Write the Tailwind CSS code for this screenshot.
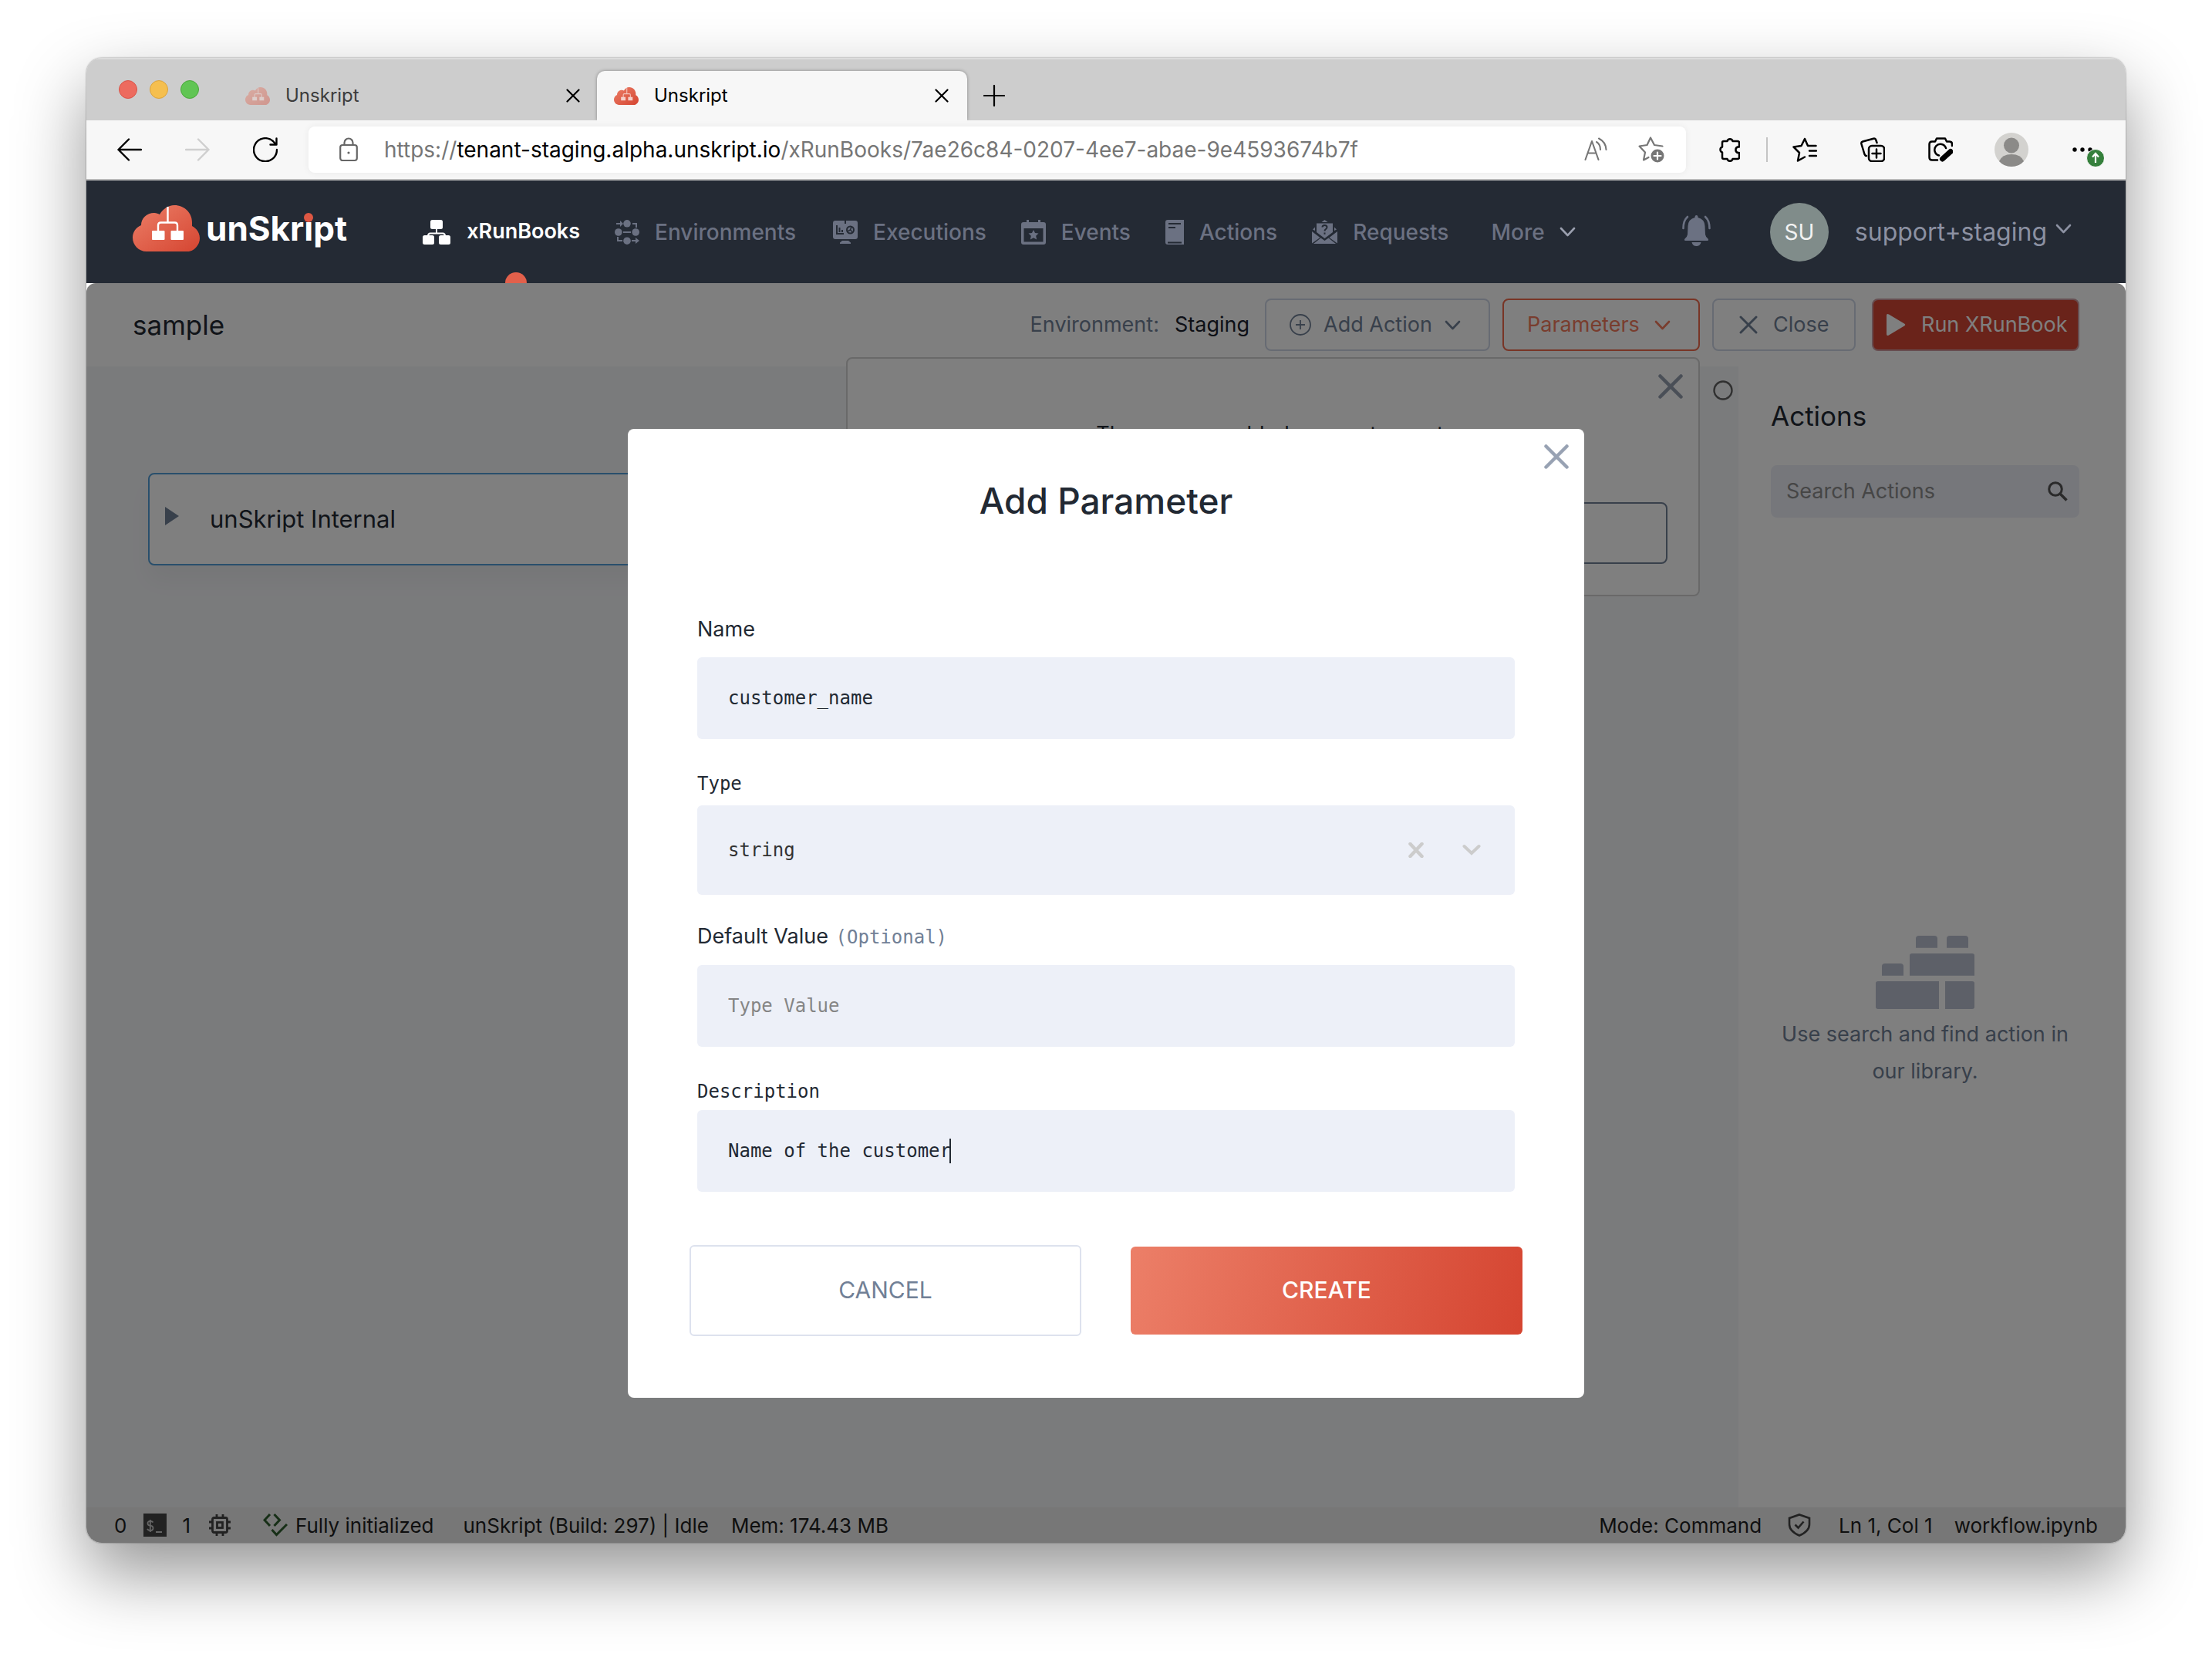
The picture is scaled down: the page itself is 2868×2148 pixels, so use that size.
<!DOCTYPE html>
<html lang="en">
<head>
<meta charset="utf-8">
<title>Unskript</title>
<script src="https://cdn.jsdelivr.net/npm/@tailwindcss/browser@4"></script>
</head>
<body class="flex min-h-screen flex-col bg-white px-[112px] pt-[75px] pb-[148px] font-['Inter',sans-serif] text-[27px] text-[#222933]">

<!-- Shared symbols -->
<svg class="absolute size-0" aria-hidden="true">
  <defs>
    <linearGradient id="coral" x1="0" y1="0" x2="1" y2="1"><stop offset="0" stop-color="#ec7f68"/><stop offset="1" stop-color="#d54531"/></linearGradient>
    <symbol id="cloud" viewBox="0 0 87 60">
      <path fill="url(#coral)" d="M18 60C8 60 0 52 0 42c0-7 4-13 11-16 0-9 7-16 17-16 3 0 5 1 7 2C39 5 46 0 54 0c13 0 23 10 23 22v5c6 3 10 9 10 16 0 9-8 17-16 17z"/>
      <path fill="none" stroke="#fff" stroke-width="2.4" d="M45.500 2v20M33 34v-8q0-3.500 3.500-3.500h18q3.500 0 3.500 3.500v8"/>
      <rect x="25" y="33" width="16.500" height="12" rx="1" fill="#fff"/><rect x="49.500" y="33" width="16.500" height="12" rx="1" fill="#fff"/>
    </symbol>
    <symbol id="favicon" viewBox="0 0 87 60" preserveAspectRatio="none">
      <path fill="url(#coral)" d="M18 60C8 60 0 52 0 42c0-7 4-13 11-16 0-9 7-16 17-16 3 0 5 1 7 2C39 5 46 0 54 0c13 0 23 10 23 22v5c6 3 10 9 10 16 0 9-8 17-16 17z"/>
      <path fill="none" stroke="#fff" stroke-opacity="0.6" stroke-width="3" d="M45.500 3v20M33 34v-8q0-3.500 3.500-3.500h18q3.500 0 3.500 3.500v8"/>
      <path fill="#fff" fill-opacity="0.7" d="M25 33h16v12H25zM50 33h16v12H50z"/>
    </symbol>
    <symbol id="chev" viewBox="0 0 21 13"><path d="M2 2l8.500 9L19 2" fill="none" stroke="currentColor" stroke-width="2.600" stroke-linecap="round" stroke-linejoin="round"/></symbol>
    <symbol id="cross" viewBox="0 0 32 32"><path d="M2.500 2.500l27 27M29.500 2.500l-27 27" fill="none" stroke="currentColor" stroke-width="4.500" stroke-linecap="round"/></symbol>
    <symbol id="tabx" viewBox="0 0 18 18"><path d="M1.500 1.500l15 15M16.500 1.500l-15 15" fill="none" stroke="currentColor" stroke-width="2.200" stroke-linecap="round"/></symbol>
  </defs>
</svg>

<div class="flex flex-1 flex-col overflow-hidden rounded-[20px] shadow-[0_0_2px_rgba(0,0,0,0.5),0_40px_90px_rgba(0,0,0,0.42)]">

  <!-- Tab strip -->
  <div class="flex h-[81px] items-end border-t-2 border-[#dcdcdc] bg-[#cdcdcd] pl-[42px]">
    <div class="flex gap-4 self-start pt-[27px]">
      <span class="size-6 rounded-full border border-[#d95448] bg-[#ed6b5f]"></span>
      <span class="size-6 rounded-full border border-[#dba33c] bg-[#f5bf4f]"></span>
      <span class="size-6 rounded-full border border-[#4ba73c] bg-[#61c554]"></span>
    </div>
    <div class="ml-[60px] flex h-16 w-[456px] items-center pr-[22px] text-2xl text-[#3c3c3c]">
      <svg class="mr-5 h-[23px] w-8 opacity-40"><use href="#favicon"/></svg>
      <span class="flex-1">Unskript</span>
      <button aria-label="Close tab" class="text-black"><svg class="size-[18px]"><use href="#tabx"/></svg></button>
    </div>
    <div class="flex h-16 w-[480px] items-center rounded-t-[10px] bg-[#f7f7f7] pr-6 pl-[22px] text-2xl text-black shadow-[0_0_4px_rgba(0,0,0,0.35)]">
      <svg class="mr-5 h-[23px] w-8"><use href="#favicon"/></svg>
      <span class="flex-1">Unskript</span>
      <button aria-label="Close tab"><svg class="size-[18px]"><use href="#tabx"/></svg></button>
    </div>
    <button aria-label="New tab" class="ml-[21px] flex h-16 items-center text-black"><svg class="size-7" viewBox="0 0 28 28"><path d="M14 1v26M1 14h26" stroke="currentColor" stroke-width="2.200" stroke-linecap="round"/></svg></button>
  </div>

  <!-- Toolbar -->
  <div class="relative flex h-[78px] items-center border-b-2 border-[#b9b9b9] bg-[#f7f7f7] pr-7 pl-10 text-black">
    <div class="flex items-center gap-14">
      <button aria-label="Back"><svg class="size-8" viewBox="0 0 32 32" fill="none" stroke="currentColor" stroke-width="2.400" stroke-linecap="round" stroke-linejoin="round"><path d="M31 16H1.500M15 2.500L1.500 16 15 29.500"/></svg></button>
      <button aria-label="Forward" class="text-[#cfcfcf]"><svg class="size-8" viewBox="0 0 32 32" fill="none" stroke="currentColor" stroke-width="2.400" stroke-linecap="round" stroke-linejoin="round"><path d="M1 16h29.500M17 2.500L30.500 16 17 29.500"/></svg></button>
      <button aria-label="Reload"><svg class="size-8" viewBox="0 0 32 32" fill="none" stroke="currentColor" stroke-width="2.400" stroke-linecap="round" stroke-linejoin="round"><path d="M31 16A15 15 0 1 1 26 5l4 4.500M30.500 1.500v8h-8"/></svg></button>
    </div>
    <div class="ml-10 flex h-[60px] flex-1 items-center rounded-lg bg-white pr-7 pl-10 text-[28px] text-[#767676] shadow-[0_0_10px_rgba(0,0,0,0.06)]">
      <svg class="mr-[34px] h-8 w-6" viewBox="0 0 24 32" fill="none" stroke="#666" stroke-width="2.200"><rect x="1.200" y="10" width="21.600" height="20" rx="3"/><path d="M6.500 10V7a5.500 5.500 0 0 1 11 0v3"/><circle cx="12" cy="20" r="1.600" fill="#666" stroke="none"/></svg>
      <div class="flex-1 whitespace-nowrap">https://<span class="text-black">tenant-staging.alpha.unskript.io</span>/xRunBooks/7ae26c84-0207-4ee7-abae-9e4593674b7f</div>
      <button aria-label="Read aloud" class="mr-10"><svg class="h-8 w-[30px]" viewBox="0 0 30 32" fill="none" stroke="currentColor" stroke-width="2.100" stroke-linecap="round" stroke-linejoin="round"><path d="M1.500 29L10 5l8.500 24M4.500 20.500h11M16 6q5 3 5 10M19 1.500q9 4.500 9.500 14.500"/></svg></button>
      <button aria-label="Add to favorites"><svg class="size-[34px]" viewBox="0 0 34 34" fill="none" stroke="currentColor" stroke-width="2.200" stroke-linejoin="round" stroke-linecap="round"><path d="M31.500 12.500l-10.500-1.500L16 1.500 11.500 11 1.500 12.500l7.500 8L7 30.500l6.500-3.500"/><circle cx="25" cy="25" r="8.500" fill="currentColor" stroke="none"/><path stroke="#fff" d="M25 20.500v9M20.500 25h9"/></svg></button>
    </div>
    <button aria-label="Extensions" class="ml-[42px]"><svg class="h-8 w-7" viewBox="0 0 28 32" fill="none" stroke="currentColor" stroke-width="2.500" stroke-linejoin="round"><path d="M7 5h4.500a3.600 3.600 0 0 1 7 0H25q2 0 2 2v5.500h-2a4 4 0 0 0 0 7.500h2v6q0 2-2 2h-6.500a3.600 3.600 0 0 1-7 0H7q-2 0-2-2v-6.500a3.700 3.700 0 0 1 0-7V7q0-2 2-2z"/></svg></button>
    <span class="ml-[34px] h-8 w-[2px] bg-[#c4c4c4]"></span>
    <button aria-label="Favorites" class="ml-8"><svg class="size-8" viewBox="0 0 32 32" fill="none" stroke="currentColor" stroke-width="2.500" stroke-linejoin="round" stroke-linecap="round"><path d="M30.500 11H20L16 2l-4.500 9L1.500 12.500l7.500 7.500L7 30.500l9-5M22 17.500h9M22 24h9"/></svg></button>
    <button aria-label="Collections" class="ml-14"><svg class="size-8" viewBox="0 0 32 32" fill="none" stroke="currentColor" stroke-width="2.500" stroke-linejoin="round" stroke-linecap="round"><path d="M21.500 7l-1.200-3.500q-.8-2.500-3.300-1.800L3 5.500Q.8 6.200 1.400 8.500L5.500 22q.8 2 2.500 2"/><rect x="11" y="11" width="20" height="20" rx="4"/><path d="M21 15.500v11M15.500 21h11"/></svg></button>
    <button aria-label="Web capture" class="ml-14"><svg class="size-8" viewBox="0 0 32 32" fill="none" stroke="currentColor" stroke-width="2.500" stroke-linejoin="round" stroke-linecap="round"><path d="M31 11V9q0-3.500-3.500-3.500H24L22 1.500H11L9 5.500H5Q1.500 5.500 1.500 9v17q0 3.500 3.500 3.500h7M23 14a7.500 7.500 0 1 0-9 9.500"/><path d="M29 18.500L18.500 28" stroke-width="7"/></svg></button>
    <svg class="ml-[54px] size-11" viewBox="0 0 44 44"><circle cx="22" cy="22" r="22" fill="#d3d2cf"/><circle cx="22" cy="16.500" r="10" fill="#8b8a88"/><path fill="#8b8a88" d="M6 37q4-9 16-9t16 9q-6 7-16 7T6 37z"/></svg>
    <button aria-label="Settings and more" class="ml-14"><svg class="h-11 w-[42px]" viewBox="0 0 42 44"><circle cx="4" cy="22" r="2.700"/><circle cx="14" cy="22" r="2.700"/><circle cx="24" cy="22" r="2.700"/><circle cx="31" cy="33" r="11.500" fill="#35803c" stroke="#f7f7f7"/><path d="M31 39V27.500M27 31.500l4-4.500 4 4.500" fill="none" stroke="#fff" stroke-width="2.200"/></svg></button>
  </div>

  <!-- Site navigation -->
  <header class="relative flex h-[133px] shrink-0 items-center bg-[#242a34] pr-[70px] pl-[60px] text-[28px] font-medium text-[#6b7182]">
    <a href="#" class="mb-[10px] flex items-center gap-2 text-[44px] leading-[60px] font-bold text-white">
      <svg class="h-[60px] w-[87px]"><use href="#cloud"/></svg>
      <span>unSkr<span class="relative">i<span class="absolute top-[7px] left-0 size-3 rounded-full bg-[#dd5743]"></span></span>pt</span>
    </a>
    <nav class="ml-[98px] flex h-full flex-1 items-center gap-[45px]">
      <a href="#" class="relative flex h-full items-center gap-[21px] text-[27px] font-semibold text-white">
        <svg class="h-8 w-9" viewBox="0 0 36 32" fill="currentColor"><rect x="10" width="16" height="12" rx="2.500"/><rect y="20" width="15" height="12" rx="2.500"/><rect x="21" y="20" width="15" height="12" rx="2.500"/><path d="M18 11v7M7 21q0-3.500 3-3.500h16q3 0 3 3.500" fill="none" stroke="currentColor" stroke-width="2"/></svg>
        xRunBooks
        <span class="absolute bottom-0 left-[107px] h-[14px] w-7 rounded-t-full bg-[#e2604b]"></span>
      </a>
      <a href="#" class="flex items-center gap-5">
        <svg class="size-8" viewBox="0 0 32 32" fill="currentColor"><circle cx="16" cy="4.800" r="4.800"/><circle cx="4.800" cy="16" r="4.800"/><circle cx="27.200" cy="16" r="4.800"/><circle cx="16" cy="27.200" r="4.800"/><path d="M2 4h5V1l4 4-4 4V6H2zM23 4h6v6h-2V6h-4zM11 15h10v2H11zM3 22h2v4h5v2H3zM22 26h5v-3l5 4-5 4v-3h-5z"/></svg>
        Environments
      </a>
      <a href="#" class="ml-[3px] flex items-center gap-5">
        <svg class="size-8" viewBox="0 0 32 32"><path fill="currentColor" d="M3 1h12v4h2V1h12q3 0 3 3v18q0 3-3 3H3q-3 0-3-3V4q0-3 3-3zM12 27h8l3 2.500V31H9v-1.500z"/><path stroke="#242a34" stroke-width="2" fill="none" d="M5 7v11h9M8.500 10v6M12 13v3"/><circle cx="22.500" cy="13" r="4.500" fill="none" stroke="#242a34" stroke-width="2"/><path stroke="#242a34" stroke-width="1.500" fill="none" d="M19 15l3.500-2 1.500-4M22.500 13l3 3"/></svg>
        Executions
      </a>
      <a href="#" class="flex items-center gap-5">
        <svg class="size-8" viewBox="0 0 32 32"><path fill="currentColor" fill-rule="evenodd" d="M7 0h3v3h12V0h3v3h4q3 0 3 3v23q0 3-3 3H3q-3 0-3-3V6q0-3 3-3h4zM3.500 11v17.500h25V11z"/><path fill="currentColor" d="M16 13l2 4 4.500.6-3.300 3.200.9 4.700L16 23.300l-4.100 2.200.9-4.700-3.300-3.200L14 17z"/></svg>
        Events
      </a>
      <a href="#" class="flex items-center gap-5">
        <svg class="h-8 w-6" viewBox="0 0 24 32"><path fill="currentColor" d="M3 0h21v32H3q-3 0-3-3V3q0-3 3-3z"/><path stroke="#242a34" stroke-width="1.800" fill="none" d="M4 5h16M4 10h9M3 29.500h18"/></svg>
        Actions
      </a>
      <a href="#" class="flex items-center gap-5">
        <svg class="h-8 w-[33px]" viewBox="0 0 33 32"><path fill="currentColor" d="M16.500 0l4 3h-8zM6 4.500h21V16l-10.500 8L6 16zM0 15l10.500 8L0 30.500zM33 15l-10.500 8L33 30.500zM2 31l9.500-7.500 5 3.500 5-3.500L31 31zM4 9.500V14l-3-1.500zM29 9.500V14l3-1.500z"/><path d="M13.500 9.500q0-2.500 3-2.500t3 2.500q0 1.500-1.500 2.500t-1.500 2.500M16.500 16.500v2.300" fill="none" stroke="#242a34" stroke-width="2"/></svg>
        Requests
      </a>
      <button class="ml-[10px] flex items-center gap-[19px]">More <svg class="h-[13px] w-[21px] text-[#9a9fae]"><use href="#chev"/></svg></button>
    </nav>
    <button aria-label="Notifications"><svg class="mb-1 h-10 w-[37px]" viewBox="0 0 37 40"><path fill="currentColor" d="M16.500 3q0-3 2-3t2 3q8.500 2 9 11l.5 11q.5 3 3.500 5.500 1.500 2.500-1 2.500h-28q-2.500 0-1-2.500Q6.500 28 7 25l.5-11q.5-9 9-11zM12.500 35h12q-1 5-6 5t-6-5z"/><path fill="none" stroke="currentColor" stroke-width="2.600" stroke-linecap="round" d="M7 2Q1.500 7 1.500 17M30 2q5.500 5 5.500 15"/></svg></button>
    <span class="ml-[77px] flex size-[76px] items-center justify-center rounded-full bg-[#808c8a] text-[28px] font-normal text-[#f2f2f2]">SU</span>
    <button class="ml-[34px] flex items-center gap-[11px] text-[32px] font-normal text-[#8c91a2]">support+staging <svg class="mb-2 h-[13px] w-[21px]"><use href="#chev"/></svg></button>
  </header>

  <!-- Page with the modal over it -->
  <div class="relative flex flex-1 flex-col bg-white">
    <div class="flex h-[108px] items-center pr-[60px] pl-[60px]">
      <h1 class="flex-1 text-[35px]">sample</h1>
      <span class="text-[#718096]">Environment:</span>
      <span class="mr-5 ml-5 text-[#1a202c]">Staging</span>
      <button class="flex h-[68px] w-[292px] items-center rounded-lg border-2 border-[#cfd7e6] pl-[30px] text-[#718096]">
        <svg class="mr-4 size-7" viewBox="0 0 28 28" fill="none" stroke="currentColor" stroke-width="1.800"><circle cx="14" cy="14" r="13"/><path d="M14 8v12M8 14h12"/></svg>
        Add Action
        <svg class="ml-4 h-[13px] w-[21px]"><use href="#chev"/></svg>
      </button>
      <div class="relative ml-4">
        <button class="flex h-[68px] w-[256px] items-center rounded-lg border-2 border-[#f06a4c] pl-[30px] text-[#f27a5c]">Parameters <svg class="ml-[19px] h-[13px] w-[21px]"><use href="#chev"/></svg></button>
        <section class="absolute top-full right-0 z-10 mt-2 flex h-[310px] w-[1107px] flex-col rounded-lg border-2 border-[#d2d2d2] bg-white pt-5">
          <button aria-label="Close parameters" class="mr-5 self-end text-[#949eae]"><svg class="size-8"><use href="#cross"/></svg></button>
          <p class="mt-[26px] pr-2 text-center leading-10">There are no added parameters yet</p>
          <button aria-label="Add parameter" class="mx-10 mt-[68px] h-20 rounded-lg border-2 border-[#718096]"></button>
        </section>
      </div>
      <button class="ml-4 flex h-[68px] w-[186px] items-center rounded-lg border-2 border-[#cfd7e6] pl-[33px] text-[#718096]">
        <svg class="mr-5 size-6"><use href="#tabx"/></svg>Close
      </button>
      <button class="ml-[21px] flex h-[68px] w-[269px] items-center rounded-lg border-2 border-[#cf9aa0] bg-[#d44634] pl-[17px] text-white">
        <svg class="mr-5 h-7 w-[25px]" viewBox="0 0 25 28" fill="currentColor"><path d="M0 2q0-3 3-1.500l20 12q2.500 1.500 0 3l-20 12Q0 29 0 26z"/></svg>Run XRunBook
      </button>
    </div>

    <div class="flex flex-1">
      <main class="flex-1 bg-[#f5f6f9]">
        <div class="flex justify-end pt-[18px] pr-[7px]"><svg class="size-[26px]" viewBox="0 0 26 26"><circle cx="13" cy="13" r="11.500" fill="none" stroke="#616161" stroke-width="2.400"/></svg></div>
        <div class="mt-[94px] mr-24 ml-20 flex h-[120px] items-center rounded-lg border-2 border-[#539fd8] bg-white pl-5 shadow-[0_20px_30px_rgba(0,0,0,0.04)]">
          <svg class="mr-10 mb-2 h-6 w-[18px]" viewBox="0 0 18 24"><path fill="#718096" d="M0 0l18 12L0 24z"/></svg>
          <span class="text-[31px]">unSkript Internal</span>
        </div>
      </main>
      <aside class="flex w-[502px] flex-col bg-white pt-[42px] pr-[60px] pl-[42px]">
        <h2 class="text-[35px] leading-[44px]">Actions</h2>
        <label class="mt-[42px] flex h-[68px] items-center rounded-lg bg-[#edeff7] pr-[15px] pl-5">
          <input aria-label="Search Actions" placeholder="Search Actions" class="w-full flex-1 bg-transparent placeholder:text-[#8c8c8c]">
          <svg class="size-[26px]" viewBox="0 0 26 26" fill="none" stroke="#555" stroke-width="3"><circle cx="10" cy="10" r="8.300"/><path d="M16 16l8.500 8.500" stroke-width="3.500"/></svg>
        </label>
        <div class="flex flex-1 flex-col items-center justify-center text-center text-[#718096]">
          <svg class="mb-[9px] h-[95px] w-32" viewBox="0 0 128 103" preserveAspectRatio="none" fill="#bac0d0"><path d="M52 17V4q0-4 4-4h20q4 0 4 4v13zM92 17V4q0-4 4-4h20q4 0 4 4v13zM44 56V28q0-3 3-3h78q3 0 3 3v28zM8 56V43q0-4 4-4h20q4 0 4 4v13zM3 64h79v39H3q-3 0-3-3V67q0-3 3-3zM90 64h35q3 0 3 3v33q0 3-3 3H90z"/></svg>
          <p class="leading-[48px]">Use search and find action in<br>our library.</p>
        </div>
      </aside>
    </div>

    <footer class="flex h-[46px] items-center bg-[#eee] pr-9 pl-9 text-[26px] text-[#1f1f1f]">
      <span>0</span>
      <svg class="ml-[22px] size-[30px]" viewBox="0 0 30 30"><path fill="#444" d="M0 0h30v30H0z"/><path d="M12.500 11.500Q11.500 10 8.800 10 5.500 10 5.500 12.700t3.300 3q3.700.3 3.700 3.300t-3.700 3Q6 22 5 20M8.800 8v16M16 24h8" fill="none" stroke="#ccc" stroke-width="1.800"/></svg>
      <span class="ml-5">1</span>
      <svg class="ml-6 size-7" viewBox="0 0 28 28" fill="none" stroke="#444" stroke-width="2.800"><rect x="4.500" y="4.500" width="19" height="19" rx="2"/><rect x="10.500" y="10.500" width="7" height="7"/><path d="M10 0v4M18 0v4M10 24v4M18 24v4M0 10h4M0 18h4M24 10h4M24 18h4"/></svg>
      <svg class="ml-[42px] size-8" viewBox="0 0 32 32" fill="none" stroke="#2f5f2f" stroke-width="3"><path d="M9 2L2 9.500 9 17M14.500 2l7 7.500-7 7.500M11.500 22l6 6.500L31 15"/></svg>
      <span class="ml-[10px]">Fully initialized</span>
      <span class="ml-[38px]">unSkript (Build: 297) | Idle</span>
      <span class="ml-[29px] flex-1">Mem: 174.43 MB</span>
      <span>Mode: Command</span>
      <svg class="mr-9 ml-[34px] size-[30px]" viewBox="0 0 30 30" fill="none" stroke="#444" stroke-width="2.600"><path d="M15 1.500l13 4.500v8q0 9-13 14.500Q2 23 2 14V6zM9.500 14.500l4 4 7-8"/></svg>
      <span>Ln 1, Col 1</span>
      <span class="ml-7">workflow.ipynb</span>
    </footer>

    <div class="absolute inset-0 z-20 flex items-center justify-center rounded-t-xl bg-black/50">
      <form role="dialog" aria-labelledby="dlg" class="relative flex w-[1240px] flex-col rounded-lg bg-white px-20 pt-[63px] pb-20">
        <button type="button" aria-label="Close dialog" class="absolute top-5 right-5 text-[#98a2b3]"><svg class="size-8"><use href="#cross"/></svg></button>
        <h2 id="dlg" class="text-center text-[46px] leading-[60px] font-medium">Add Parameter</h2>
        <div class="mt-[121px] flex flex-col px-[10px]">
          <label for="name" class="leading-8">Name</label>
          <input id="name" value="customer_name" class="mt-5 h-[106px] rounded-md bg-[#edf0f8] px-10 font-['DejaVu_Sans_Mono',monospace] text-2xl">
          <label for="type" class="mt-[42px] font-['DejaVu_Sans_Mono',monospace] text-2xl leading-8">Type</label>
          <div class="mt-3 flex h-[116px] items-center rounded-md bg-[#edf0f8] pr-11 pl-10 text-[#ccc]">
            <select id="type" class="flex-1 appearance-none bg-transparent font-['DejaVu_Sans_Mono',monospace] text-2xl text-[#333]"><option>string</option></select>
            <button type="button" aria-label="Clear type"><svg class="size-5" viewBox="0 0 20 20"><path d="M2.500 2l15 16M17.500 2l-15 16" stroke="currentColor" stroke-width="4.500" stroke-linecap="round"/></svg></button>
            <svg class="ml-[50px] h-4 w-6" viewBox="0 0 24 16"><path d="M2.500 3l9.500 9 9.500-9" fill="none" stroke="currentColor" stroke-width="4" stroke-linecap="round"/></svg>
          </div>
          <label for="default" class="mt-[38px] leading-8">Default Value <span class="ml-[2px] font-['DejaVu_Sans_Mono',monospace] text-2xl text-[#718096]">(Optional)</span></label>
          <input id="default" placeholder="Type Value" class="mt-5 h-[106px] rounded-md bg-[#edf0f8] px-10 font-['DejaVu_Sans_Mono',monospace] text-2xl placeholder:text-[#858585]">
          <label for="desc" class="mt-[42px] font-['DejaVu_Sans_Mono',monospace] text-2xl leading-8">Description</label>
          <div class="mt-2 flex h-[106px] items-center rounded-md bg-[#edf0f8] px-10">
            <input id="desc" value="Name of the customer" class="field-sizing-content bg-transparent font-['DejaVu_Sans_Mono',monospace] text-2xl">
            <span class="-ml-[2px] h-8 w-[2px] bg-[#222933]"></span>
          </div>
        </div>
        <div class="mt-[69px] grid grid-cols-2 items-center gap-16 text-[30px]">
          <button type="button" class="h-[118px] rounded-md border-2 border-[#dde2ee] text-[#718096]">CANCEL</button>
          <button class="h-[114px] rounded-md bg-linear-[105deg,#ec7f68,#d54531] font-medium text-white">CREATE</button>
        </div>
      </form>
    </div>
  </div>
</div>
</body>
</html>
